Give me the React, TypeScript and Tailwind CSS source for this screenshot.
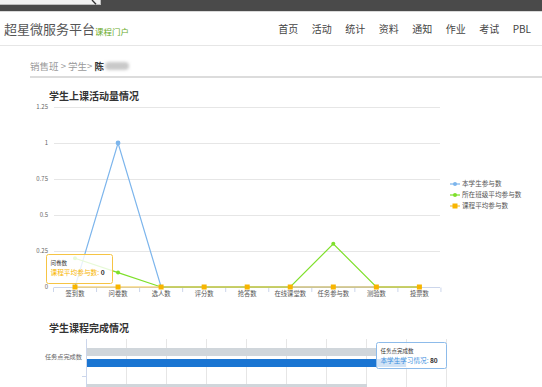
import React from "react";

const FONT = '"Noto Sans CJK SC", "Noto Sans", sans-serif';

const cats = ["签到数", "问卷数", "选人数", "评分数", "抢答数", "在线课堂数", "任务参与数", "测验数", "投票数"];
const xs = cats.map((_, i) => 75 + 43.05 * i);
const yv = (v: number) => 287 - 144 * v;
const blue = [0, 1, 0, 0, 0, 0, 0, 0, 0];
const green = [0.2, 0.1, 0, 0, 0, 0, 0.3, 0, 0];
const yellow = [0, 0, 0, 0, 0, 0, 0, 0, 0];

const pts = (vals: number[]) => vals.map((v, i) => `${xs[i]},${yv(v)}`).join(" ");

function ActivityChart() {
  const yTicks = [
    { v: 1.25, l: "1.25" },
    { v: 1, l: "1" },
    { v: 0.75, l: "0.75" },
    { v: 0.5, l: "0.5" },
    { v: 0.25, l: "0.25" },
    { v: 0, l: "0" },
  ];
  return (
    <svg width="542" height="198" viewBox="0 102 542 198" style={{ fontFamily: FONT }} className="block">
      {yTicks.map((t) => (
        <g key={t.l}>
          {t.v > 0 && <line x1="54" x2="440" y1={yv(t.v) + 0.5} y2={yv(t.v) + 0.5} stroke="#e6e6e6" strokeWidth="1" />}
          <text x="48" y={yv(t.v) + 2} textAnchor="end" fontSize="6" fill="#666">
            {t.l}
          </text>
        </g>
      ))}
      <line x1="54" x2="440" y1="287.5" y2="287.5" stroke="#ccd6eb" strokeWidth="1" />
      {Array.from({ length: 10 }).map((_, k) => (
        <line key={k} x1={53.5 + 43.05 * k} x2={53.5 + 43.05 * k} y1="287.5" y2="292" stroke="#ccd6eb" strokeWidth="1" />
      ))}
      {cats.map((c, i) => (
        <text key={c} x={xs[i]} y="295.5" textAnchor="middle" fontSize="6.3" fill="#555">
          {c}
        </text>
      ))}
      <polyline points={pts(blue)} fill="none" stroke="#7cb5ec" strokeWidth="1.2" />
      <polyline points={pts(green)} fill="none" stroke="#7ee02a" strokeWidth="1.2" />
      {green.map((v, i) => (
        <circle key={i} cx={xs[i]} cy={yv(v)} r="2" fill="#7ee02a" />
      ))}
      <circle cx={xs[1]} cy={yv(1)} r="2.4" fill="#7cb5ec" />
      <polyline points={pts(yellow)} fill="none" stroke="#f5c342" strokeWidth="1.2" />
      {yellow.map((v, i) => (
        <rect key={i} x={xs[i] - 2.5} y={yv(v) - 2.5} width="5" height="5" fill="#f8b500" />
      ))}

      {/* legend */}
      <g fontSize="6.6" fill="#555">
        <line x1="450" x2="460" y1="184" y2="184" stroke="#7cb5ec" strokeWidth="1.2" />
        <circle cx="455" cy="184" r="2" fill="#7cb5ec" />
        <text x="462" y="186.3">本学生参与数</text>
        <line x1="450" x2="460" y1="195" y2="195" stroke="#7ee02a" strokeWidth="1.2" />
        <circle cx="455" cy="195" r="2" fill="#7ee02a" />
        <text x="462" y="197.3">所在班级平均参与数</text>
        <line x1="450" x2="460" y1="206" y2="206" stroke="#f5c342" strokeWidth="1.2" />
        <rect x="452.5" y="203.5" width="5" height="5" fill="#f8b500" />
        <text x="462" y="208.3">课程平均参与数</text>
      </g>

      {/* tooltip */}
      <rect x="46.5" y="254.5" width="66" height="29" rx="2" fill="rgba(255,255,255,0.82)" stroke="#f6c444" strokeWidth="1" />
      <text x="50.5" y="264.5" fontSize="5.5" fill="#333">
        问卷数
      </text>
      <text x="50.5" y="274.5" fontSize="6.7" fill="#f8b500">
        课程平均参与数:{" "}
        <tspan fill="#333" fontWeight="bold">
          0
        </tspan>
      </text>
    </svg>
  );
}

function CompletionChart() {
  return (
    <svg width="542" height="53" viewBox="0 334 542 53" style={{ fontFamily: FONT }} className="block">
      {Array.from({ length: 10 }).map((_, k) => (
        <line key={k} x1={86.5 + 40 * k} x2={86.5 + 40 * k} y1="339" y2="387" stroke={k === 0 ? "#ccd6eb" : "#e6e6e6"} strokeWidth="1" />
      ))}
      <line x1="82" x2="86.5" y1="376.5" y2="376.5" stroke="#ccd6eb" strokeWidth="1" />
      <rect x="87" y="348" width="289" height="8" fill="#d0d6db" />
      <rect x="87" y="359" width="319" height="8" fill="#1a75d2" />
      <rect x="87" y="384" width="280" height="4" fill="#d0d6db" />
      <text x="82" y="359" textAnchor="end" fontSize="6.2" fill="#666">
        任务点完成数
      </text>
      <rect x="376.5" y="342.5" width="70" height="26" rx="2" fill="rgba(255,255,255,0.8)" stroke="#8dbbea" strokeWidth="1" />
      <text x="380.5" y="353" fontSize="5.5" fill="#333">
        任务点完成数
      </text>
      <text x="380.5" y="363.3" fontSize="6.6" fill="#3b8fe0">
        本学生学习情况:{" "}
        <tspan fill="#333" fontWeight="bold">
          80
        </tspan>
      </text>
    </svg>
  );
}

export default function App() {
  const nav = ["首页", "活动", "统计", "资料", "通知", "作业", "考试", "PBL"];
  return (
    <div className="w-[542px] h-[387px] overflow-hidden bg-white" style={{ fontFamily: FONT }}>
      <div className="h-[12px] bg-[#4a4a4a] border-b border-[#d9d9d9] flex items-start">
        <div className="w-[101px] h-[5px] bg-[#f1f1f1] border-r border-b border-[#bdbdbd] relative">
          <svg className="absolute right-[2px] top-0" width="8" height="5" viewBox="0 0 8 5">
            <line x1="2" y1="0" x2="6" y2="4.2" stroke="#333" strokeWidth="1.3" />
          </svg>
        </div>
      </div>
      <header className="h-[34px] flex items-center justify-between border-b border-[#e6e6e6] pl-[4px] pr-[11px]">
        <div className="flex items-end">
          <span className="text-[13px] leading-[16px] text-[#555]">超星微服务平台</span>
          <span className="text-[8.5px] leading-[12px] text-[#6aab2a]">课程门户</span>
        </div>
        <nav className="flex gap-[13.5px] text-[10px] leading-[12px] text-[#444]">
          {nav.map((n) => (
            <span key={n}>{n}</span>
          ))}
        </nav>
      </header>
      <div className="pt-[14px] pl-[30px] flex items-center h-[26px] text-[9.5px] leading-[12px] text-[#9a9a9a] whitespace-pre">
        <span>{"销售班 > 学生> "}</span>
        <span className="font-bold text-[#333]">陈</span>
        <span className="ml-[1px] w-[24px] h-[8px] rounded-full bg-[#c9c9c9] blur-[1.5px]" />
      </div>
      <div className="mt-[4px] ml-[30px] h-[2px] bg-[#dcdcdc]" />
      <div className="mt-[12px] pl-[49px] text-[10px] leading-[12px] font-bold text-[#333]">学生上课活动量情况</div>
      <ActivityChart />
      <div className="mt-[22px] pl-[49px] text-[10px] leading-[12px] font-bold text-[#333]">学生课程完成情况</div>
      <CompletionChart />
    </div>
  );
}
